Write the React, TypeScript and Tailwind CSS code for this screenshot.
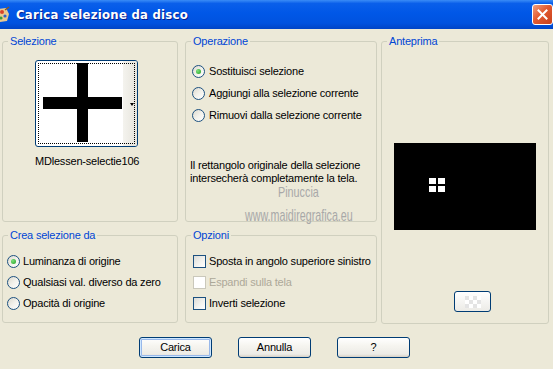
import React from "react";

const Radio = ({ checked }: { checked?: boolean }) => (
  <span className="relative inline-flex w-[13px] h-[13px] shrink-0 rounded-full border border-[#1C5180] bg-[linear-gradient(135deg,#DCD9CE_0%,#F2F1EB_50%,#FFFFFF_100%)] items-center justify-center">
    {checked && (
      <span className="block w-[5px] h-[5px] rounded-full bg-[radial-gradient(circle_at_35%_35%,#7CE07C,#21A121)]" />
    )}
  </span>
);

const Check = ({ disabled }: { disabled?: boolean }) => (
  <span
    className={
      disabled
        ? "inline-block w-[13px] h-[13px] shrink-0 border border-[#CAC8BB] bg-white"
        : "inline-block w-[13px] h-[13px] shrink-0 border border-[#1C5180] bg-[linear-gradient(135deg,#DCDCD7_0%,#F2F2EE_55%,#FFFFFF_100%)]"
    }
  />
);

const Btn = ({ label, def }: { label: string; def?: boolean }) => (
  <button
    className={
      "w-[73px] h-[21px] rounded-[3px] border border-[#003C74] bg-[linear-gradient(#FFFFFF_0%,#F6F5F0_40%,#ECEBE6_85%,#D6D0C5_100%)] text-black text-[11px] leading-none " +
      (def ? "shadow-[inset_0_0_0_1px_#CEE7FF,inset_0_0_0_2px_#98B8EA]" : "")
    }
  >
    {label}
  </button>
);

const Legend = ({ children }: { children: React.ReactNode }) => (
  <legend className="ml-[5px] px-[2px] leading-[13px] text-[#0046D5]">{children}</legend>
);

export default function App() {
  return (
    <div className="w-[553px] h-[369px] overflow-hidden bg-[#ECE9D8] text-[11px] tracking-[-0.2px] text-black font-['Liberation_Sans',Arial,sans-serif]">
      {/* Title bar */}
      <div className="h-[29px] flex items-center bg-[linear-gradient(#3A8CF6_0%,#0A5FEA_12%,#0057E7_45%,#0052DF_80%,#0044C6_100%)]">
        <svg width="14" height="18" viewBox="0 0 14 18" className="ml-[-3px] shrink-0">
          <path d="M1 3 L9 2 L12 8 L10 15 L3 16 L0 10 Z" fill="#E8C890" />
          <circle cx="5" cy="6" r="2" fill="#D8402A" />
          <circle cx="8" cy="10" r="1.6" fill="#2C62C8" />
          <circle cx="4" cy="12" r="1.6" fill="#3A9A3A" />
          <path d="M8 4 L12 1" stroke="#8A5A20" strokeWidth="1.5" />
        </svg>
        <span className="ml-[5px] text-white font-bold text-[13px] tracking-[0.25px] font-['DejaVu_Sans_Condensed','Liberation_Sans',sans-serif] [text-shadow:1px_1px_0_#0A1E8C]">
          Carica selezione da disco
        </span>
        <div className="ml-auto mr-0 w-[21px] h-[21px] rounded-[3px] border border-white bg-[linear-gradient(135deg,#F0A080_0%,#E25A30_45%,#C8401C_100%)] flex items-center justify-center">
          <svg width="11" height="11" viewBox="0 0 11 11">
            <path d="M1.5 1.5 L9.5 9.5 M9.5 1.5 L1.5 9.5" stroke="white" strokeWidth="2" strokeLinecap="square" />
          </svg>
        </div>
      </div>

      {/* Body */}
      <div className="flex pl-[2px] pt-[6px]">
        {/* Left column */}
        <div className="flex flex-col w-[176px] gap-[7px]">
          <fieldset className="h-[187px] border border-[#D0D0BF] rounded-[3px]">
            <Legend>Selezione</Legend>
            <div className="flex flex-col items-start pl-[32px] pt-[12px]">
              <div className="relative w-[103px] h-[87px] rounded-[3px] border border-[#003C74] bg-white overflow-hidden">
                <div className="absolute left-[87px] top-0 w-[14px] h-full bg-[linear-gradient(90deg,#F4F3EE,#E6E4DC)]" />
                <div className="absolute inset-[2px] border border-dotted border-black" />
                <svg className="absolute left-0 top-0" width="103" height="87" viewBox="0 0 103 87">
                  <rect x="41" y="2" width="11" height="79" fill="#000" />
                  <rect x="7" y="36" width="79" height="12" fill="#000" />
                  <path d="M94 42 L98 42 L96 45 Z" fill="#000" />
                </svg>
              </div>
              <div className="mt-[8px] leading-[13px]">MDlessen-selectie106</div>
            </div>
          </fieldset>
          <fieldset className="h-[94px] border border-[#D0D0BF] rounded-[3px]">
            <Legend>Crea selezione da</Legend>
            <div className="flex flex-col pl-[4px] pt-[13px] gap-[8px]">
              <label className="flex items-center gap-[3px] h-[13px]">
                <Radio checked />
                <span>Luminanza di origine</span>
              </label>
              <label className="flex items-center gap-[3px] h-[13px]">
                <Radio />
                <span>Qualsiasi val. diverso da zero</span>
              </label>
              <label className="flex items-center gap-[3px] h-[13px]">
                <Radio />
                <span>Opacità di origine</span>
              </label>
            </div>
          </fieldset>
        </div>

        {/* Middle column */}
        <div className="ml-[7px] flex flex-col w-[192px] gap-[7px]">
          <fieldset className="relative h-[187px] border border-[#D0D0BF] rounded-[3px]">
            <Legend>Operazione</Legend>
            <div className="flex flex-col pl-[6px] pt-[17px] gap-[9px]">
              <label className="flex items-center gap-[4px] h-[13px]">
                <Radio checked />
                <span>Sostituisci selezione</span>
              </label>
              <label className="flex items-center gap-[4px] h-[13px]">
                <Radio />
                <span>Aggiungi alla selezione corrente</span>
              </label>
              <label className="flex items-center gap-[4px] h-[13px]">
                <Radio />
                <span>Rimuovi dalla selezione corrente</span>
              </label>
            </div>
            <p className="pl-[4px] mt-[37px] leading-[13px]">
              Il rettangolo originale della selezione
              <br />
              intersecherà completamente la tela.
            </p>
            <div className="absolute left-[92px] top-[136px] text-[15px] leading-none tracking-[0px] text-[#A8A8A8] scale-x-[0.72] origin-left font-['Liberation_Sans',sans-serif]">
              Pinuccia
            </div>
            <div className="absolute left-[59px] top-[159px] text-[17px] leading-none tracking-[0px] text-[#A8A8A8] scale-x-[0.63] origin-left font-['Liberation_Sans',sans-serif]">
              www.maidiregrafica.eu
            </div>
          </fieldset>
          <fieldset className="h-[94px] border border-[#D0D0BF] rounded-[3px]">
            <Legend>Opzioni</Legend>
            <div className="flex flex-col pl-[7px] pt-[13px] gap-[8px]">
              <label className="flex items-center gap-[3px] h-[13px]">
                <Check />
                <span>Sposta in angolo superiore sinistro</span>
              </label>
              <label className="flex items-center gap-[3px] h-[13px] text-[#ACA899]">
                <Check disabled />
                <span>Espandi sulla tela</span>
              </label>
              <label className="flex items-center gap-[3px] h-[13px]">
                <Check />
                <span>Inverti selezione</span>
              </label>
            </div>
          </fieldset>
        </div>

        {/* Right column */}
        <div className="ml-[4px] w-[168px]">
          <fieldset className="h-[289px] border border-[#D0D0BF] rounded-[3px] flex flex-col">
            <Legend>Anteprima</Legend>
            <div className="pl-[12px] pt-[95px]">
              <div className="w-[142px] h-[87px] bg-black flex items-start">
                <div className="ml-[35px] mt-[35px] grid grid-cols-2 gap-[2px]">
                  <span className="w-[7px] h-[6px] bg-white" />
                  <span className="w-[7px] h-[6px] bg-white" />
                  <span className="w-[7px] h-[6px] bg-white" />
                  <span className="w-[7px] h-[6px] bg-white" />
                </div>
              </div>
            </div>
            <div className="pl-[72px] pt-[61px]">
              <div className="w-[37px] h-[21px] rounded-[3px] border border-[#003C74] bg-[linear-gradient(#FFFFFF,#ECEBE6)] flex items-center justify-center">
                <div className="grid grid-cols-4">
                  {Array.from({ length: 12 }).map((_, i) => (
                    <span
                      key={i}
                      className={
                        (Math.floor(i / 4) + (i % 4)) % 2 === 0
                          ? "w-[4px] h-[4px] bg-[#E4E4E4]"
                          : "w-[4px] h-[4px] bg-white"
                      }
                    />
                  ))}
                </div>
              </div>
            </div>
          </fieldset>
        </div>
      </div>

      {/* Buttons */}
      <div className="flex pl-[139px] pt-[13px] gap-[26px]">
        <Btn label="Carica" def />
        <Btn label="Annulla" />
        <Btn label="?" />
      </div>
    </div>
  );
}
